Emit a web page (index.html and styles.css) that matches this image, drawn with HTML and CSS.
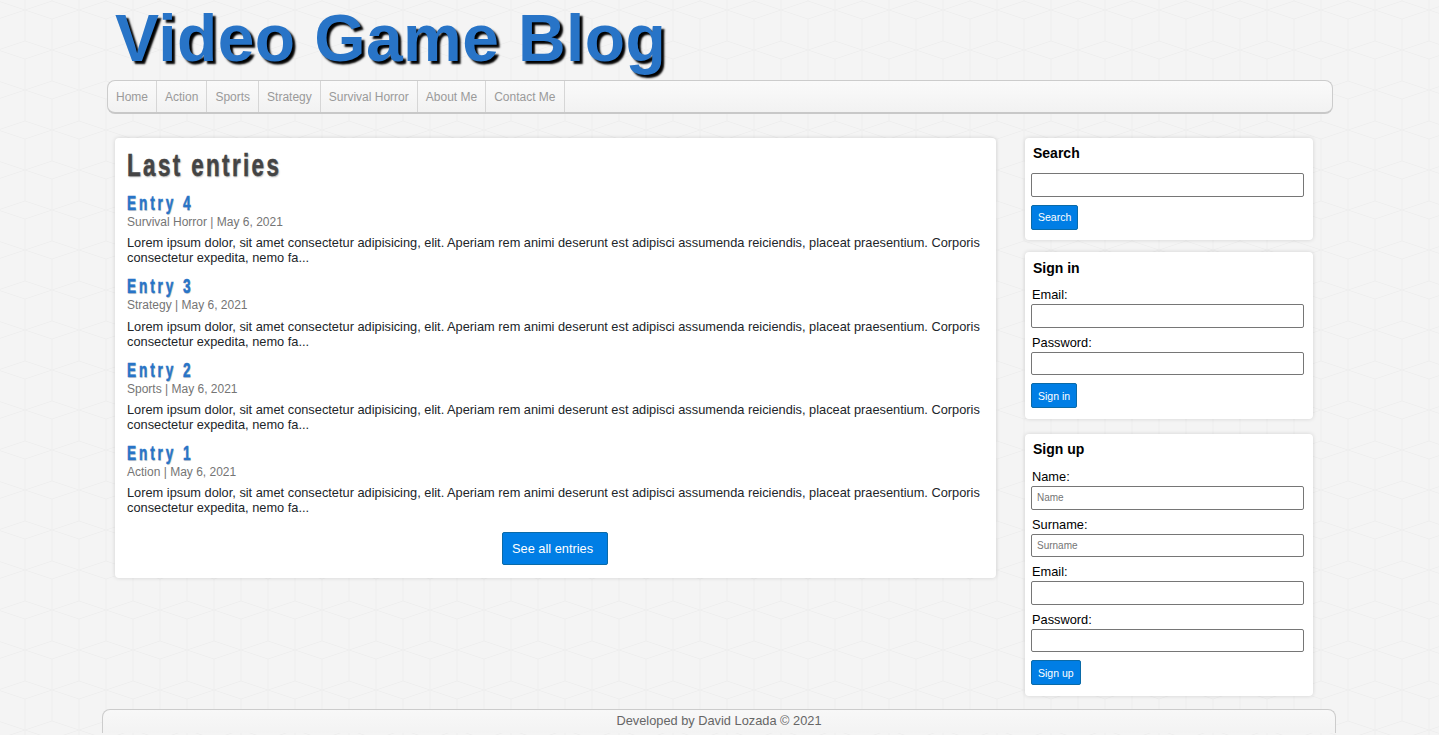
FILE: index.html
```html
<!DOCTYPE html>
<html lang="en">
<head>
<meta charset="utf-8">
<title>Video Game Blog</title>
<link rel="stylesheet" href="styles.css">
</head>
<body>
<div class="page">
  <header class="site-header">
    <h1 class="site-title">Video Game Blog</h1>
  </header>
  <nav class="main-nav">
    <a class="nav-link" href="#">Home</a>
    <a class="nav-link" href="#">Action</a>
    <a class="nav-link" href="#">Sports</a>
    <a class="nav-link" href="#">Strategy</a>
    <a class="nav-link" href="#">Survival Horror</a>
    <a class="nav-link" href="#">About Me</a>
    <a class="nav-link" href="#">Contact Me</a>
  </nav>
  <div class="layout">
    <main class="card entries">
      <h2 class="entries-title"><span class="condensed">Last entries</span></h2>
      <article class="entry">
        <h3 class="entry-title"><span class="condensed">Entry 4</span></h3>
        <div class="entry-meta">Survival Horror | May 6, 2021</div>
        <p class="entry-text">Lorem ipsum dolor, sit amet consectetur adipisicing, elit. Aperiam rem animi deserunt est adipisci assumenda reiciendis, placeat praesentium. Corporis consectetur expedita, nemo fa...</p>
      </article>
      <article class="entry">
        <h3 class="entry-title"><span class="condensed">Entry 3</span></h3>
        <div class="entry-meta">Strategy | May 6, 2021</div>
        <p class="entry-text">Lorem ipsum dolor, sit amet consectetur adipisicing, elit. Aperiam rem animi deserunt est adipisci assumenda reiciendis, placeat praesentium. Corporis consectetur expedita, nemo fa...</p>
      </article>
      <article class="entry">
        <h3 class="entry-title"><span class="condensed">Entry 2</span></h3>
        <div class="entry-meta">Sports | May 6, 2021</div>
        <p class="entry-text">Lorem ipsum dolor, sit amet consectetur adipisicing, elit. Aperiam rem animi deserunt est adipisci assumenda reiciendis, placeat praesentium. Corporis consectetur expedita, nemo fa...</p>
      </article>
      <article class="entry">
        <h3 class="entry-title"><span class="condensed">Entry 1</span></h3>
        <div class="entry-meta">Action | May 6, 2021</div>
        <p class="entry-text">Lorem ipsum dolor, sit amet consectetur adipisicing, elit. Aperiam rem animi deserunt est adipisci assumenda reiciendis, placeat praesentium. Corporis consectetur expedita, nemo fa...</p>
      </article>
      <div class="entries-more"><a class="btn btn-large" href="#">See all entries</a></div>
    </main>
    <aside class="sidebar">
      <section class="card widget widget-search">
        <h4 class="widget-title">Search</h4>
        <input class="field field-search" type="text">
        <button class="btn btn-small">Search</button>
      </section>
      <section class="card widget widget-signin">
        <h4 class="widget-title">Sign in</h4>
        <label class="label">Email:</label>
        <input class="field" type="text">
        <label class="label">Password:</label>
        <input class="field" type="password">
        <button class="btn btn-small">Sign in</button>
      </section>
      <section class="card widget widget-signup">
        <h4 class="widget-title">Sign up</h4>
        <label class="label">Name:</label>
        <input class="field" type="text" placeholder="Name">
        <label class="label">Surname:</label>
        <input class="field" type="text" placeholder="Surname">
        <label class="label">Email:</label>
        <input class="field" type="text">
        <label class="label">Password:</label>
        <input class="field" type="password">
        <button class="btn btn-small">Sign up</button>
      </section>
    </aside>
  </div>
</div>
<footer class="site-footer">Developed by David Lozada © 2021</footer>
</body>
</html>
```
FILE: styles.css
```css
* { box-sizing: border-box; }
html, body { margin: 0; padding: 0; height: 735px; overflow: hidden; }
body {
  background-color: #f4f4f4;
  background-image: url("data:image/svg+xml,%3Csvg xmlns='http://www.w3.org/2000/svg' width='54' height='80'%3E%3Cpath d='M-27 10L0 1L27 10L0 19ZM27 10L54 1L81 10L54 19ZM0 50L27 41L54 50L27 59ZM0 19V50M0 50V80M0 0V1M54 19V50M54 50V80M54 0V1M27 0V10M27 10V41M27 59V80' fill='none' stroke='%23eeeeee' stroke-width='1'/%3E%3C/svg%3E");
  background-position: -2px 0;
  font-family: "Liberation Sans", Arial, sans-serif;
  font-size: 12.8px;
  color: #212529;
}
.page { width: 1226px; height: 709px; margin-left: 107px; }
.site-header { height: 80px; padding-left: 8px; }
.site-title {
  margin: 0;
  font-size: 66px;
  line-height: 77px;
  font-weight: 700;
  letter-spacing: 0.4px;
  color: #2874c7;
  text-shadow: 3px 3px 2px #000;
  white-space: nowrap;
}
.main-nav {
  display: flex;
  height: 34px;
  border: 1px solid #ccc;
  border-bottom: 2px solid #c8c8c8;
  border-radius: 8px;
  background: linear-gradient(#fafafa, #f2f2f2);
}
.nav-link {
  padding: 0 8px;
  line-height: 32px;
  font-size: 12px;
  color: #9a9a9a;
  text-decoration: none;
  border-right: 1px solid #d6d6d6;
}
.layout {
  display: flex;
  align-items: flex-start;
  padding-left: 8px;
  margin-top: 24px;
}
.card {
  background: #fff;
  border-radius: 4px;
  box-shadow: 0 0 4px rgba(0,0,0,.14);
}
.entries { width: 881px; height: 440px; padding: 8px 13px 0 12px; }
.condensed {
  display: inline-block;
  transform: scaleX(.7);
  transform-origin: left center;
  white-space: nowrap;
  -webkit-text-stroke: .5px currentColor;
}
.entries-title {
  margin: 0;
  font-size: 32px;
  line-height: 38px;
  font-weight: 700;
  letter-spacing: 3.4px;
  color: #444;
  text-shadow: 1px 1px 2px rgba(0,0,0,.35);
}
.entry { height: 83.4px; }
.entries-title + .entry { margin-top: 9px; }
.entry-title {
  margin: 0;
  font-size: 19.5px;
  line-height: 20px;
  font-weight: 700;
  letter-spacing: 4.1px;
  color: #2874c7;
  text-shadow: 1px 1px 1px rgba(0,0,0,.2);
}
.entry-meta { font-size: 12px; line-height: 18px; color: #757575; }
.entry-text { margin: 4.3px 0 0; font-size: 12.8px; line-height: 15px; color: #212529; }
.entries-more { display: flex; justify-content: center; margin-top: 5.4px; }
.btn {
  display: inline-block;
  background: #007ee5;
  color: #fff;
  border: 1px solid #0a6aa8;
  border-radius: 2px;
  font-family: inherit;
  text-decoration: none;
}
.btn-large { font-size: 12.8px; height: 33px; line-height: 31px; padding: 0 0 0 9px; width: 106px; }
.btn-small { display: block; font-size: 10.5px; height: 25px; line-height: 23px; padding: 0 6px; margin-top: 8px; }
.widget-signin .btn-small, .widget-signup .btn-small { padding-top: 1px; }
.sidebar { display: flex; flex-direction: column; margin-left: 29px; width: 288px; }
.widget { padding: 6px 9px 0 6px; }
.widget-search { height: 102px; }
.widget-signin { height: 167px; margin-top: 12px; padding-top: 7px; }
.widget-signup { height: 262px; margin-top: 15px; }
.widget-title { margin: 0 0 0 2px; font-size: 14px; line-height: 18px; font-weight: 700; color: #000; }
.label { display: block; font-size: 12.8px; line-height: 12.2px; color: #000; margin: 9px 0 3px 1px; }
.widget-title + .label { margin-top: 12px; }
.widget-signup .widget-title + .label { margin-top: 13px; }
.field {
  display: block;
  width: 273px;
  height: 23.4px;
  padding: 0 5px;
  border: 1px solid #767676;
  border-radius: 2px;
  background: #fff;
  font-family: inherit;
  font-size: 10px;
}
.field-search { margin-top: 11.3px; }
.site-footer {
  width: 1234px;
  height: 24px;
  margin-left: 102px;
  border: 1px solid #ccc;
  border-bottom: 0;
  border-radius: 8px 8px 0 0;
  background: linear-gradient(#f8f8f8, #f3f3f3);
  text-align: center;
  font-size: 12.8px;
  line-height: 21px;
  color: #666;
}
```
